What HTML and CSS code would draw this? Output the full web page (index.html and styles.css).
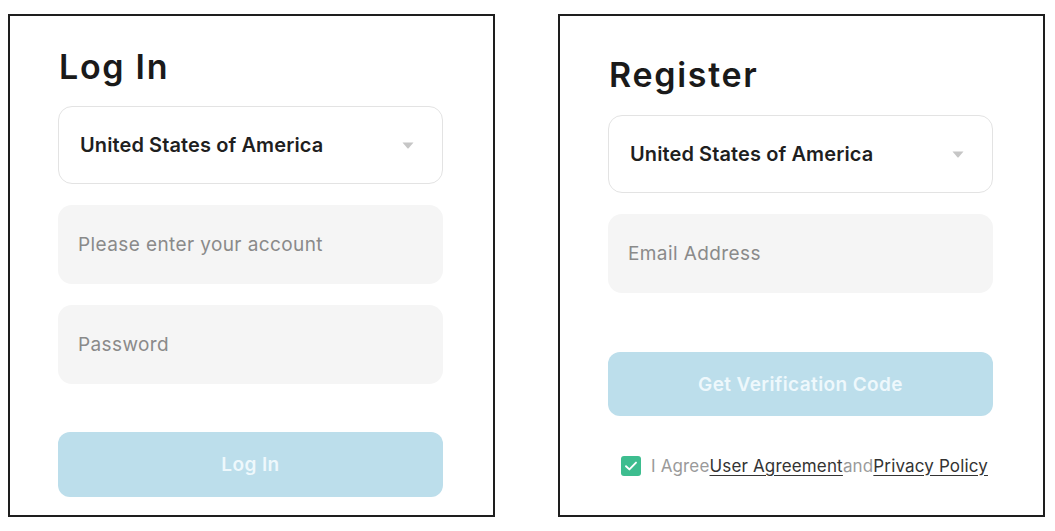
FILE: index.html
```html
<!DOCTYPE html>
<html lang="en">
<head>
<meta charset="utf-8">
<title>Log In / Register</title>
<link rel="stylesheet" href="styles.css">
</head>
<body>
<main class="page">
  <section class="panel panel-login">
    <h1 class="title">Log In</h1>
    <div class="select">
      <span class="select-text">United States of America</span>
      <svg class="caret" width="12" height="7" viewBox="0 0 12 7"><path d="M0.5 0.5 H11.5 L6.6 6.2 Q6 6.8 5.4 6.2 Z" fill="#c6c6c6"/></svg>
    </div>
    <div class="field">Please enter your account</div>
    <div class="field">Password</div>
    <button class="btn btn-login" type="button">Log In</button>
  </section>

  <section class="panel panel-register">
    <h1 class="title">Register</h1>
    <div class="select">
      <span class="select-text">United States of America</span>
      <svg class="caret" width="12" height="7" viewBox="0 0 12 7"><path d="M0.5 0.5 H11.5 L6.6 6.2 Q6 6.8 5.4 6.2 Z" fill="#c6c6c6"/></svg>
    </div>
    <div class="field">Email Address</div>
    <button class="btn btn-code" type="button">Get Verification Code</button>
    <div class="agree">
      <span class="check"><svg width="14" height="12" viewBox="0 0 14 12"><path d="M2 6.2 L5.4 9.4 L12 2.6" fill="none" stroke="#ffffff" stroke-width="1.9" stroke-linecap="round" stroke-linejoin="round"/></svg></span>
      <span class="agree-text"><span class="muted">I Agree</span><a class="link" href="#">User Agreement</a><span class="muted">and</span><a class="link" href="#">Privacy Policy</a></span>
    </div>
  </section>
</main>
</body>
</html>
```

FILE: styles.css
```css
* { box-sizing: border-box; }

html, body {
  margin: 0;
  padding: 0;
  background: #ffffff;
}

body {
  font-family: Inter, "Noto Sans", "Liberation Sans", sans-serif;
  color: #1c1c1c;
}

.page {
  display: flex;
  gap: 63px;
  padding: 14px 0 0 8px;
}

.panel {
  width: 487px;
  height: 503px;
  border: 2px solid #1e1e1e;
  display: flex;
  flex-direction: column;
  padding: 0 50px 0 48px;
}

.panel-login { padding-top: 31px; }
.panel-register { padding-top: 39px; }

.title {
  margin: 0 0 0 1px;
  font-size: 34px;
  line-height: 40px;
  font-weight: 600;
  letter-spacing: 1.7px;
  color: #1a1a1a;
}

.panel-login .title { margin-bottom: 19px; }
.panel-register .title { margin-bottom: 20px; }

.select {
  height: 78px;
  border: 1px solid #e3e3e3;
  border-radius: 14px;
  display: flex;
  align-items: center;
  justify-content: space-between;
  padding: 0 28px 0 21px;
}

.select-text {
  font-size: 20px;
  font-weight: 600;
  color: #1f1f1f;
  letter-spacing: 0.1px;
}

.caret { display: block; }

.field {
  height: 79px;
  margin-top: 21px;
  background: #f5f5f5;
  border-radius: 14px;
  display: flex;
  align-items: center;
  padding: 0 20px;
  font-size: 19px;
  color: #8a8a8a;
  letter-spacing: 0.4px;
}

.btn {
  display: block;
  width: 100%;
  border: 0;
  border-radius: 12px;
  background: #bcdeeb;
  color: #eef8fc;
  font-family: inherit;
  font-size: 19px;
  font-weight: 600;
  padding: 0;
  letter-spacing: 0.4px;
}

.btn-login {
  height: 65px;
  margin-top: 48px;
}

.btn-code {
  height: 64px;
  margin-top: 59px;
}

.agree {
  display: flex;
  align-items: center;
  gap: 10px;
  margin-top: 40px;
  padding-left: 13px;
}

.check {
  width: 20px;
  height: 20px;
  border-radius: 3px;
  background: #3dbd8f;
  display: flex;
  align-items: center;
  justify-content: center;
  flex: none;
}

.check svg { display: block; }

.agree-text {
  font-size: 17px;
  line-height: 20px;
  letter-spacing: 0.15px;
  white-space: nowrap;
}

.muted { color: #9a9a9a; }

.link {
  color: #333333;
  text-decoration: underline;
  text-underline-offset: 3px;
}
```
